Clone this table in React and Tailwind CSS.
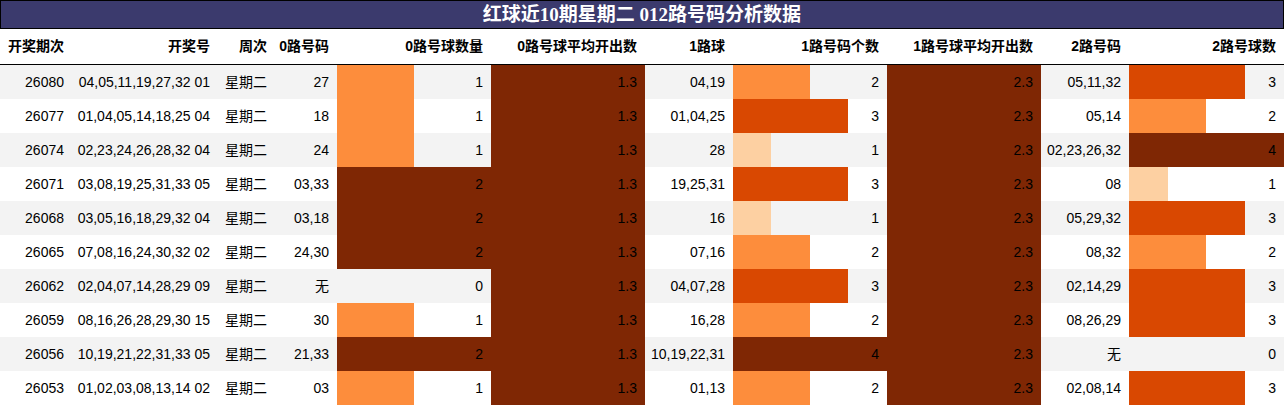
import React from 'react';

const rows = [
  ['26080', '04,05,11,19,27,32 01', '27', 1, '04,19', 2, '05,11,32', 3],
  ['26077', '01,04,05,14,18,25 04', '18', 1, '01,04,25', 3, '05,14', 2],
  ['26074', '02,23,24,26,28,32 04', '24', 1, '28', 1, '02,23,26,32', 4],
  ['26071', '03,08,19,25,31,33 05', '03,33', 2, '19,25,31', 3, '08', 1],
  ['26068', '03,05,16,18,29,32 04', '03,18', 2, '16', 1, '05,29,32', 3],
  ['26065', '07,08,16,24,30,32 02', '24,30', 2, '07,16', 2, '08,32', 2],
  ['26062', '02,04,07,14,28,29 09', '无', 0, '04,07,28', 3, '02,14,29', 3],
  ['26059', '08,16,26,28,29,30 15', '30', 1, '16,28', 2, '08,26,29', 3],
  ['26056', '10,19,21,22,31,33 05', '21,33', 2, '10,19,22,31', 4, '无', 0],
  ['26053', '01,02,03,08,13,14 02', '03', 1, '01,13', 2, '02,08,14', 3],
];

const headers = ['开奖期次', '开奖号', '周次', '0路号码', '0路号球数量', '0路号球平均开出数', '1路球', '1路号码个数', '1路号球平均开出数', '2路号码', '2路号球数'];

// colours for 0-4 on a 4 scale
const shade = ['transparent', '#fdd0a2', '#fd8d3c', '#d94801', '#7f2704'];

const barStyle = (value, max) => {
  if (!value) return {};
  const pct = (value / max) * 100;
  const color = shade[Math.round((value / max) * 4)];
  return { background: `linear-gradient(to right, ${color} ${pct}%, transparent ${pct}%)` };
};

const grid = 'grid grid-cols-[72px_146px_57px_62px_154px_154px_88px_154px_154px_88px_155px]';
const cell = 'flex items-center justify-end pr-2';

const App = () => {
  return (
    <div className="w-[1284px] bg-white text-black text-[14px] font-['Liberation_Sans','Noto_Sans_CJK_SC',sans-serif]">
      <div className="h-[29px] bg-[#3b3a6d] border border-black flex items-center justify-center">
        <h1 className="text-white text-[19px] font-bold leading-none font-['Liberation_Serif','Noto_Sans_CJK_SC',serif]">
          红球近10期星期二 012路号码分析数据
        </h1>
      </div>

      <div className={`${grid} h-[36px] border-b border-black font-bold`}>
        {headers.map((h) => (
          <div key={h} className={cell}>{h}</div>
        ))}
      </div>

      {rows.map((r, i) => (
        <div key={r[0]} className={`${grid} h-[34px] ${i % 2 === 0 ? 'bg-[#f3f3f3]' : 'bg-white'}`}>
          <div className={cell}>{r[0]}</div>
          <div className={cell}>{r[1]}</div>
          <div className={cell}>星期二</div>
          <div className={cell}>{r[2]}</div>
          <div className={cell} style={barStyle(r[3], 2)}>{r[3]}</div>
          <div className={`${cell} bg-[#7f2704]`}>1.3</div>
          <div className={cell}>{r[4]}</div>
          <div className={cell} style={barStyle(r[5], 4)}>{r[5]}</div>
          <div className={`${cell} bg-[#7f2704]`}>2.3</div>
          <div className={cell}>{r[6]}</div>
          <div className={cell} style={barStyle(r[7], 4)}>{r[7]}</div>
        </div>
      ))}
    </div>
  );
};

export default App;
